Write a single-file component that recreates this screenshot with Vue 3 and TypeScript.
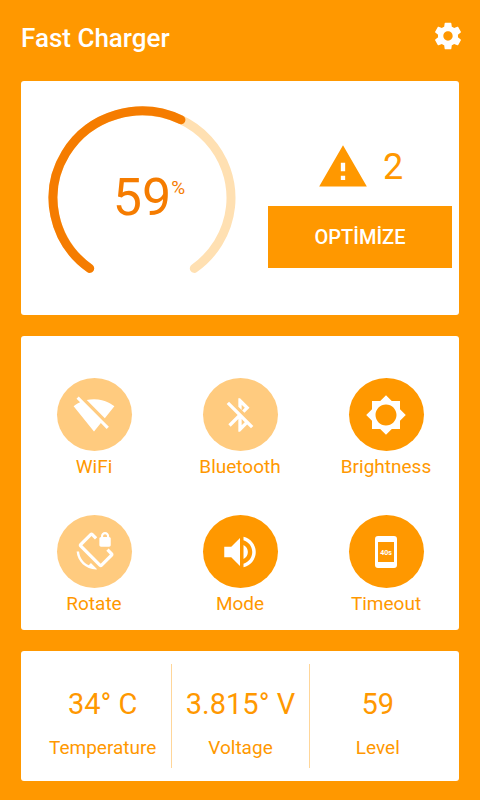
<script setup lang="ts">
interface Tile {
  label: string
  active: boolean
  size: number
  path?: string
  badge?: string
}

interface Stat {
  label: string
  value: string
}

const level = 59
const issues = 2

const tiles: Tile[] = [
  {
    label: 'WiFi',
    active: false,
    size: 42,
    path: 'M23.64 7c-.45-.34-4.93-4-11.64-4-1.5 0-2.89.19-4.15.48L18.18 13.8 23.64 7zm-6.6 8.22L3.27 1.44 2 2.72l2.05 2.06C1.91 5.76.59 6.82.36 7l11.63 14.49.01.01.01-.01 3.9-4.86 3.32 3.32 1.27-1.27-3.46-3.46z',
  },
  {
    label: 'Bluetooth',
    active: false,
    size: 40,
    path: 'M13 5.83l1.88 1.88-1.6 1.6 1.41 1.41 3.02-3.02L12 2h-1v5.03l2 2v-3.2zM5.41 4L4 5.41 10.59 12 5 17.59 6.41 19 11 14.41V22h1l4.29-4.29 2.3 2.29L20 18.59 5.41 4zM13 18.17v-3.76l1.88 1.88L13 18.17z',
  },
  {
    label: 'Brightness',
    active: true,
    size: 42,
    path: 'M20 15.31L23.31 12 20 8.69V4h-4.69L12 .69 8.69 4H4v4.69L.69 12 4 15.31V20h4.69L12 23.31 15.31 20H20v-4.69zM12 18c-3.31 0-6-2.69-6-6s2.69-6 6-6 6 2.69 6 6-2.69 6-6 6z',
  },
  {
    label: 'Rotate',
    active: false,
    size: 39,
    path: 'M23.25 12.77l-2.57-2.57-1.41 1.41 2.22 2.22-5.66 5.66L4.51 8.17l5.66-5.66 2.1 2.1 1.41-1.41L11.23.75c-.59-.59-1.54-.59-2.12 0L2.75 7.11c-.59.59-.59 1.54 0 2.12l12.02 12.02c.59.59 1.54.59 2.12 0l6.36-6.36c.59-.59.59-1.54 0-2.12zM8.47 20.48C5.2 18.94 2.86 15.76 2.5 12H1c.51 6.16 5.66 11 11.95 11l.66-.03-3.81-3.82-1.33 1.33zM16 9h5c.55 0 1-.45 1-1V4c0-.55-.45-1-1-1v-.5C21 1.12 19.88 0 18.5 0S16 1.12 16 2.5V3c-.55 0-1 .45-1 1v4c0 .55.45 1 1 1zm1.3-6.4c0-.66.54-1.2 1.2-1.2s1.2.54 1.2 1.2V3h-2.4v-.4z',
  },
  {
    label: 'Mode',
    active: true,
    size: 42,
    path: 'M3 9v6h4l5 5V4L7 9H3zm13.5 3c0-1.77-1.02-3.29-2.5-4.03v8.05c1.48-.73 2.5-2.25 2.5-4.02zM14 3.23v2.06c2.89.86 5 3.54 5 6.71s-2.11 5.85-5 6.71v2.06c4.01-.91 7-4.49 7-8.77s-2.99-7.86-7-8.77z',
  },
  { label: 'Timeout', active: true, size: 42, badge: '40s' },
]

const stats: Stat[] = [
  { label: 'Temperature', value: '34° C' },
  { label: 'Voltage', value: '3.815° V' },
  { label: 'Level', value: String(level) },
]

// The dial sweeps 288 degrees clockwise from its lower left end.
const dial = { cx: 94, cy: 92, rx: 89, ry: 87, start: 126, sweep: 288 }

function arc(fraction: number): string {
  const point = (deg: number) => {
    const rad = (deg * Math.PI) / 180
    const x = dial.cx + dial.rx * Math.cos(rad)
    const y = dial.cy + dial.ry * Math.sin(rad)
    return `${x.toFixed(2)} ${y.toFixed(2)}`
  }
  const span = dial.sweep * fraction
  const large = span > 180 ? 1 : 0
  return `M${point(dial.start)}A${dial.rx} ${dial.ry} 0 ${large} 1 ${point(dial.start + span)}`
}
</script>

<template>
  <div class="screen">
    <header class="bar">
      <h1 class="title">Fast Charger</h1>
      <button class="settings" type="button" aria-label="Settings">
        <svg width="32" height="32" viewBox="0 0 24 24" fill="currentColor" aria-hidden="true">
          <path
            d="M19.43 12.98c.04-.32.07-.64.07-.98s-.03-.66-.07-.98l2.11-1.65c.19-.15.24-.42.12-.64l-2-3.46c-.12-.22-.39-.3-.61-.22l-2.49 1c-.52-.4-1.08-.73-1.69-.98l-.38-2.65C14.46 2.18 14.25 2 14 2h-4c-.25 0-.46.18-.49.42l-.38 2.65c-.61.25-1.17.59-1.69.98l-2.49-1c-.23-.09-.49 0-.61.22l-2 3.46c-.13.22-.07.49.12.64l2.11 1.65c-.04.32-.07.65-.07.98s.03.66.07.98l-2.11 1.65c-.19.15-.24.42-.12.64l2 3.46c.12.22.39.3.61.22l2.49-1c.52.4 1.08.73 1.69.98l.38 2.65c.03.24.24.42.49.42h4c.25 0 .46-.18.49-.42l.38-2.65c.61-.25 1.17-.59 1.69-.98l2.49 1c.23.09.49 0 .61-.22l2-3.46c.12-.22.07-.49-.12-.64l-2.11-1.65zM12 15.5c-1.93 0-3.5-1.57-3.5-3.5s1.57-3.5 3.5-3.5 3.5 1.57 3.5 3.5-1.57 3.5-3.5 3.5z"
          />
        </svg>
      </button>
    </header>

    <main class="cards">
      <section class="card overview">
        <div class="dial">
          <svg class="ring" width="188" height="184" viewBox="0 0 188 184" aria-hidden="true">
            <path class="track" :d="arc(1)" />
            <path class="progress" :d="arc(level / 100)" />
          </svg>
          <p class="percent">{{ level }}<span class="unit">%</span></p>
        </div>
        <div class="health">
          <p class="issues">
            <svg width="52" height="52" viewBox="0 0 24 24" fill="currentColor" aria-hidden="true">
              <path d="M1 21h22L12 2 1 21zm12-3h-2v-2h2v2zm0-4h-2v-4h2v4z" />
            </svg>
            <span>{{ issues }}</span>
          </p>
          <button class="optimize" type="button">OPTİMİZE</button>
        </div>
      </section>

      <section class="card tiles">
        <button
          v-for="tile in tiles"
          :key="tile.label"
          class="tile"
          type="button"
          :aria-pressed="tile.active"
        >
          <span class="disc" :class="{ off: !tile.active }">
            <svg
              v-if="tile.path"
              :width="tile.size"
              :height="tile.size"
              viewBox="0 0 24 24"
              fill="currentColor"
              aria-hidden="true"
            >
              <path :d="tile.path" />
            </svg>
            <svg v-else width="22" height="32" viewBox="0 0 22 32">
              <path
                fill="currentColor"
                fill-rule="evenodd"
                d="M3 0h16a3 3 0 0 1 3 3v26a3 3 0 0 1-3 3H3a3 3 0 0 1-3-3V3a3 3 0 0 1 3-3zM3 6v20h16V6z"
              />
              <text class="badge" x="11" y="19" text-anchor="middle">{{ tile.badge }}</text>
            </svg>
          </span>
          <span class="label">{{ tile.label }}</span>
        </button>
      </section>

      <dl class="card stats">
        <div v-for="stat in stats" :key="stat.label" class="stat">
          <dt class="label">{{ stat.label }}</dt>
          <dd class="value">{{ stat.value }}</dd>
        </div>
      </dl>
    </main>
  </div>
</template>

<style>
body {
  margin: 0;
  background: #ff9800;
}
</style>

<style scoped>
.screen {
  box-sizing: border-box;
  min-height: 100vh;
  padding: 20px 0 19px;
  background: #ff9800;
  color: #ff9800;
  font-family: Roboto, 'Liberation Sans', sans-serif;
}

button {
  margin: 0;
  padding: 0;
  border: 0;
  background: none;
  color: inherit;
  font: inherit;
  cursor: pointer;
}

svg {
  display: block;
}

.bar {
  display: flex;
  align-items: flex-start;
  justify-content: space-between;
  padding: 0 16px 0 21px;
  color: #fff;
}

.title {
  margin: 0;
  font-size: 26px;
  font-weight: 500;
  line-height: 36px;
}

.cards {
  display: grid;
  gap: 21px;
  padding: 25px 21px 0;
}

.card {
  margin: 0;
  border-radius: 3px;
  background: #fff;
}

.overview {
  display: flex;
  align-items: center;
  justify-content: space-between;
  padding: 25px 7px 25px 27px;
}

.dial {
  display: grid;
  place-items: center;
}

.ring,
.percent {
  grid-area: 1 / 1;
}

.ring path {
  fill: none;
  stroke-width: 9px;
  stroke-linecap: round;
}

.ring .track {
  stroke: #ffe0b2;
}

.ring .progress {
  stroke: #f57c00;
}

.percent {
  position: relative;
  margin: 0;
  color: #f57c00;
  font-size: 52px;
  line-height: 60px;
}

.unit {
  position: absolute;
  top: 8px;
  left: 100%;
  font-size: 19px;
  line-height: 24px;
}

.health {
  display: grid;
  gap: 13px;
  width: 184px;
  padding-top: 13px;
}

.issues {
  display: flex;
  align-items: center;
  justify-content: center;
  gap: 14px;
  margin: 0;
  font-size: 36px;
  line-height: 36px;
}

.optimize {
  height: 62px;
  background: #ff9800;
  color: #fff;
  font-size: 20px;
  font-weight: 500;
}

.tiles {
  display: grid;
  grid-template-columns: repeat(3, 1fr);
  row-gap: 36px;
  padding: 42px 0 14px;
}

.tile {
  display: flex;
  flex-direction: column;
  align-items: center;
  gap: 4px;
}

.disc {
  display: grid;
  place-items: center;
  width: 75px;
  height: 73px;
  border-radius: 50%;
  background: #ff9800;
  color: #fff;
}

.disc.off {
  background: #ffcb7f;
}

.badge {
  fill: #fff;
  font-size: 7px;
  font-weight: 700;
}

.label {
  font-size: 19px;
  line-height: 24px;
}

.stats {
  display: grid;
  grid-template-columns: repeat(3, 1fr);
  padding: 13px;
}

.stat {
  display: flex;
  flex-direction: column-reverse;
  align-items: center;
  gap: 14px;
  padding: 22px 0 8px;
}

.stat + .stat {
  border-left: 1px solid #ffd699;
}

.value {
  margin: 0;
  font-size: 29px;
  line-height: 36px;
}
</style>
